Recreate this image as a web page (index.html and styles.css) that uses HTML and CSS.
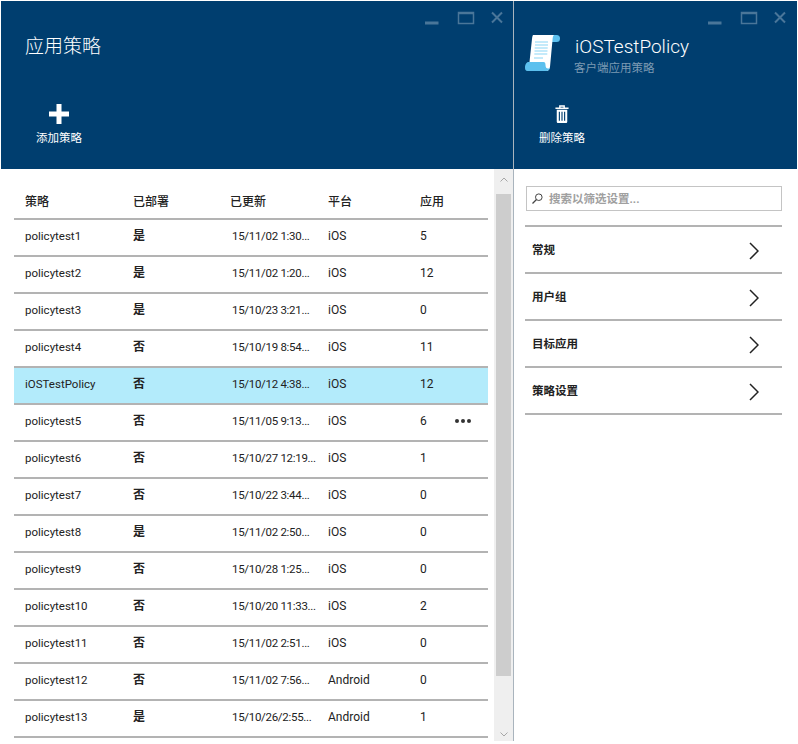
FILE: index.html
```html
<!DOCTYPE html>
<html lang="zh-CN">
<head>
    <meta charset="UTF-8">
    <meta name="viewport" content="width=device-width, initial-scale=1.0">
    <title>应用策略</title>
    <link rel="stylesheet" href="styles.css">
</head>
<body>
    <div class="portal">
        <section class="blade blade-list">
            <header class="blade-head">
                <svg class="win-controls" width="80" height="14" viewBox="0 0 80 14">
                    <rect x="0" y="11" width="13" height="2"/>
                    <path d="M33.5 1.5h15v11h-15z M33.5 2.5h15" fill="none" stroke-width="1.5"/>
                    <path d="M67 1.5l10 10M77 1.5l-10 10" fill="none" stroke-width="2"/>
                </svg>
                <h1 class="blade-title">应用策略</h1>
                <button class="cmd">
                    <svg width="20" height="20" viewBox="0 0 20 20"><path d="M7.500 0h5v7.500h7.500v5h-7.500v7.500h-5v-7.500h-7.500v-5h7.500z" fill="#fff"/></svg>
                    <span>添加策略</span>
                </button>
            </header>
            <div class="list-body">
                <div class="list-scroll">
                    <table class="policies">
                        <thead>
                            <tr><th>策略</th><th>已部署</th><th>已更新</th><th>平台</th><th>应用</th><th></th></tr>
                        </thead>
                        <tbody>
                            <tr><td class="name">policytest1</td><td class="dep">是</td><td class="upd">15/11/02 1:30...</td><td>iOS</td><td>5</td><td></td></tr>
                            <tr><td class="name">policytest2</td><td class="dep">是</td><td class="upd">15/11/02 1:20...</td><td>iOS</td><td>12</td><td></td></tr>
                            <tr><td class="name">policytest3</td><td class="dep">是</td><td class="upd">15/10/23 3:21...</td><td>iOS</td><td>0</td><td></td></tr>
                            <tr><td class="name">policytest4</td><td class="dep">否</td><td class="upd">15/10/19 8:54...</td><td>iOS</td><td>11</td><td></td></tr>
                            <tr class="selected"><td class="name">iOSTestPolicy</td><td class="dep">否</td><td class="upd">15/10/12 4:38...</td><td>iOS</td><td>12</td><td></td></tr>
                            <tr><td class="name">policytest5</td><td class="dep">否</td><td class="upd">15/11/05 9:13...</td><td>iOS</td><td>6</td><td class="more"><i></i><i></i><i></i></td></tr>
                            <tr><td class="name">policytest6</td><td class="dep">否</td><td class="upd">15/10/27 12:19...</td><td>iOS</td><td>1</td><td></td></tr>
                            <tr><td class="name">policytest7</td><td class="dep">否</td><td class="upd">15/10/22 3:44...</td><td>iOS</td><td>0</td><td></td></tr>
                            <tr><td class="name">policytest8</td><td class="dep">是</td><td class="upd">15/11/02 2:50...</td><td>iOS</td><td>0</td><td></td></tr>
                            <tr><td class="name">policytest9</td><td class="dep">否</td><td class="upd">15/10/28 1:25...</td><td>iOS</td><td>0</td><td></td></tr>
                            <tr><td class="name">policytest10</td><td class="dep">否</td><td class="upd">15/10/20 11:33...</td><td>iOS</td><td>2</td><td></td></tr>
                            <tr><td class="name">policytest11</td><td class="dep">否</td><td class="upd">15/11/02 2:51...</td><td>iOS</td><td>0</td><td></td></tr>
                            <tr><td class="name">policytest12</td><td class="dep">否</td><td class="upd">15/11/02 7:56...</td><td>Android</td><td>0</td><td></td></tr>
                            <tr><td class="name">policytest13</td><td class="dep">是</td><td class="upd">15/10/26/2:55...</td><td>Android</td><td>1</td><td></td></tr>
                        </tbody>
                    </table>
                </div>
                <div class="scrollbar">
                    <svg width="8" height="5" viewBox="0 0 8 5"><path d="M.5 4.500l3.500-3.500 3.500 3.500" fill="none" stroke="#a6a6a6"/></svg>
                    <div class="thumb"></div>
                    <svg width="8" height="5" viewBox="0 0 8 5"><path d="M.5 .5l3.500 3.500 3.500-3.500" fill="none" stroke="#a6a6a6"/></svg>
                </div>
            </div>
        </section>
        <section class="blade blade-detail">
            <header class="blade-head">
                <svg class="win-controls" width="80" height="14" viewBox="0 0 80 14">
                    <rect x="0" y="11" width="13" height="2"/>
                    <path d="M33.5 1.5h15v11h-15z M33.5 2.5h15" fill="none" stroke-width="1.5"/>
                    <path d="M67 1.5l10 10M77 1.5l-10 10" fill="none" stroke-width="2"/>
                </svg>
                <div class="detail-title">
                    <svg width="36" height="36" viewBox="0 0 36 36">
                        <path d="M25 0h6.500a3.500 3.500 0 0 1 0 7h-6z" fill="#5cc0ee"/>
                        <path d="M8 0h21c-1 1-1.300 2.500-1.400 4l-2.600 28c-.2 2-1.500 4-3.500 4h-18l3.500-32c.2-2.500 1-4 1-4z" fill="#fff"/>
                        <path d="M3 27h15.500c1.500 0 2 1 2 3 0 2.500 1 3.500 2.500 3.500 1 0 1.500-.5 2-1-.5 2-1.500 3.500-3.500 3.500h-19c-2 0-2.500-1.500-2.500-3.500 0-3 1.500-5.500 3.500-5.500z" fill="#5cc0ee"/>
                        <path d="M10 7h13M10 10h13M9.700 13h13M9.500 16h13M9.300 19h13M9 23h9" stroke="#8ad6f5" stroke-width="1.200"/>
                    </svg>
                    <div class="detail-text">
                        <h2>iOSTestPolicy</h2>
                        <p>客户端应用策略</p>
                    </div>
                </div>
                <button class="cmd">
                    <svg class="trash" width="14" height="19" viewBox="0 0 16 20" preserveAspectRatio="none">
                        <path d="M5.500 2.500v-1.500h5v1.500M.5 3.500h15" fill="none" stroke="#fff" stroke-width="1.600"/>
                        <path d="M2 5h12v12.500c0 1-.7 1.500-1.500 1.500h-9c-.8 0-1.500-.5-1.500-1.500z" fill="#fff"/>
                        <path d="M5 7v9.500M8 7v9.500M11 7v9.500" stroke="#003e6f" stroke-width="1.300"/>
                    </svg>
                    <span>删除策略</span>
                </button>
            </header>
            <div class="detail-body">
                <div class="search">
                    <svg width="11" height="11" viewBox="0 0 11 11"><circle cx="6.800" cy="4.200" r="3.300" fill="none" stroke="#444"/><path d="M4.500 6.500l-4 4" stroke="#444" stroke-width="1.200"/></svg>
                    <span>搜索以筛选设置...</span>
                </div>
                <ul class="settings">
                    <li>常规<svg width="10" height="18" viewBox="0 0 10 18"><path d="M1 1l8 8-8 8" fill="none" stroke="#222" stroke-width="1.500"/></svg></li>
                    <li>用户组<svg width="10" height="18" viewBox="0 0 10 18"><path d="M1 1l8 8-8 8" fill="none" stroke="#222" stroke-width="1.500"/></svg></li>
                    <li>目标应用<svg width="10" height="18" viewBox="0 0 10 18"><path d="M1 1l8 8-8 8" fill="none" stroke="#222" stroke-width="1.500"/></svg></li>
                    <li>策略设置<svg width="10" height="18" viewBox="0 0 10 18"><path d="M1 1l8 8-8 8" fill="none" stroke="#222" stroke-width="1.500"/></svg></li>
                </ul>
            </div>
        </section>
    </div>
</body>
</html>
```

FILE: styles.css
```css
html, body {
    margin: 0;
    padding: 0;
    height: 744px;
    overflow: hidden;
    background-color: #fff;
}
body {
    font-family: Roboto, 'Noto Sans CJK SC', Arial, sans-serif;
    font-size: 12px;
    color: #222;
}
.portal {
    display: flex;
    height: 740px;
    padding: 1px 0 0 1px;
}
.blade {
    display: flex;
    flex-direction: column;
}
.blade-list {
    width: 512px;
    border-right: 1px solid #a9b4bd;
}
.blade-detail {
    width: 283px;
}
.blade-head {
    position: relative;
    height: 168px;
    box-sizing: border-box;
    flex: none;
    background-color: #003e6f;
    color: #fff;
}
.win-controls {
    position: absolute;
    top: 10px;
    right: 8px;
    fill: #4a7699;
    stroke: #4a7699;
}
.blade-detail .win-controls {
    right: 9px;
}
.blade-title {
    margin: 0;
    padding: 31px 0 0 24px;
    height: 29px;
    font-size: 19px;
    font-weight: 300;
    line-height: 29px;
}
.cmd {
    position: absolute;
    left: 35px;
    bottom: 23px;
    display: flex;
    flex-direction: column;
    align-items: center;
    gap: 6px;
    padding: 0;
    border: 0;
    background: none;
    color: #fff;
    font: inherit;
    font-size: 11.5px;
    line-height: 16px;
}
.blade-detail .cmd {
    left: 25px;
}
.trash {
    margin-right: 1px;
}
.list-body {
    flex: 1;
    display: flex;
    min-height: 0;
}
.list-scroll {
    flex: 1;
    padding: 12px 6px 0 13px;
}
.policies {
    width: 474px;
    border-collapse: collapse;
    table-layout: fixed;
}
.policies th, .policies td {
    padding: 0 0 0 11px;
    border-bottom: 2px solid #b3b3b3;
    box-sizing: content-box;
    text-align: left;
    white-space: nowrap;
    font-size: 12px;
    line-height: 16px;
}
.policies th {
    height: 33px;
    padding-top: 4px;
    font-weight: 500;
}
.policies td {
    height: 31px;
    padding-bottom: 4px;
}
.policies th:nth-child(1) { width: 97px; }
.policies th:nth-child(2) { width: 86px; }
.policies th:nth-child(3) { width: 87px; }
.policies th:nth-child(4) { width: 81px; }
.policies th:nth-child(5) { width: 24px; }
.policies td.name {
    font-size: 11.5px;
}
.policies td.dep {
    font-weight: 700;
}
.policies td.upd {
    padding-left: 13px;
    font-size: 11.5px;
    letter-spacing: -0.3px;
}
.policies tr.selected td {
    background-color: #b3ebfb;
}
.policies td.more i {
    display: inline-block;
    width: 4px;
    height: 4px;
    margin-right: 2px;
    border-radius: 50%;
    background-color: #333;
    vertical-align: middle;
}
.scrollbar {
    flex: none;
    width: 19px;
    display: flex;
    flex-direction: column;
    align-items: center;
    justify-content: space-between;
    padding: 8px 0 4px;
    box-sizing: border-box;
    background-color: #efefef;
}
.thumb {
    width: 15px;
    height: 482px;
    margin: 12px 0 auto;
    background-color: #cdcdcd;
}
.detail-title {
    display: flex;
    align-items: flex-start;
    gap: 14px;
    padding: 34px 0 0 11px;
}
.detail-text {
    margin-top: -2px;
}
.detail-text h2 {
    margin: 0;
    font-size: 19px;
    font-weight: 300;
    line-height: 27px;
}
.detail-text p {
    margin: 0 0 0 -1px;
    color: #7d9ab3;
    font-size: 11.5px;
    line-height: 16px;
}
.detail-body {
    padding: 17px 15px 0 11px;
}
.search {
    display: flex;
    align-items: center;
    gap: 6px;
    height: 23px;
    padding-left: 5px;
    border: 1px solid #c4c4c4;
    margin-left: 1px;
    color: #a0a0a0;
    font-size: 11.5px;
    font-weight: 700;
}
.search span {
    margin-top: -2px;
}
.settings {
    margin: 14px 0 0;
    padding: 0;
    list-style: none;
    border-top: 2px solid #b3b3b3;
}
.settings li {
    display: flex;
    align-items: center;
    justify-content: space-between;
    height: 43px;
    padding: 0 23px 2px 7px;
    border-bottom: 2px solid #b3b3b3;
    font-size: 11.5px;
    font-weight: 700;
}
.settings li svg {
    margin-top: 4px;
}
```
